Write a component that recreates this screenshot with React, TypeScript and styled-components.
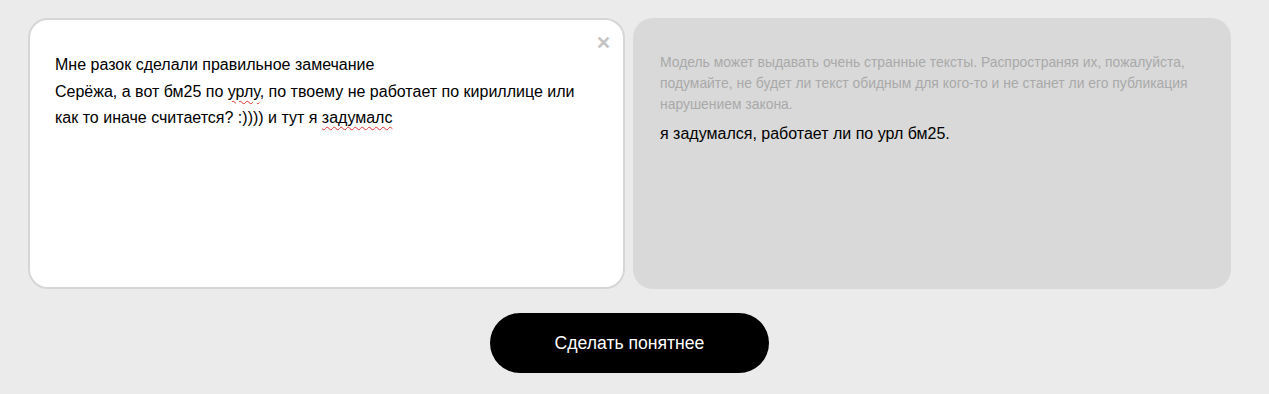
import React from 'react';
import styled, {createGlobalStyle} from "styled-components";

const GlobalStyle = createGlobalStyle`
    body {
        margin: 0;
        background: #ebebeb;
        font-family: "Liberation Sans", Arial, sans-serif;
    }
`

export default function App() {
    return (
        <Page>
            <GlobalStyle/>
            <Cards>
                <InputCard>
                    <Close>✕</Close>
                    <Line>Мне разок сделали правильное замечание</Line>
                    <Line>Серёжа, а вот бм25 по <Typo>урлу</Typo>, по твоему не работает по кириллице или
                        как то иначе считается? :)))) и тут я <Typo>задумалс</Typo></Line>
                </InputCard>
                <OutputCard>
                    <Warning>
                        Модель может выдавать очень странные тексты. Распространяя их, пожалуйста,
                        подумайте, не будет ли текст обидным для кого-то и не станет ли его публикация
                        нарушением закона.
                    </Warning>
                    <Answer>я задумался, работает ли по урл бм25.</Answer>
                </OutputCard>
            </Cards>
            <Button>Сделать понятнее</Button>
        </Page>
    );
};

const Page = styled.div`
    display: flex;
    flex-direction: column;
    align-items: center;
    padding: 18px 38px 21px 28px;
    gap: 24px;
`
const Cards = styled.div`
    display: grid;
    grid-template-columns: 597px 598px;
    gap: 8px;
    align-self: flex-start;
`
const InputCard = styled.div`
    position: relative;
    box-sizing: border-box;
    height: 271px;
    background: #fff;
    border: 2px solid #d6d6d6;
    border-radius: 20px;
    padding: 32px 40px 0 25px;
    font-size: 16px;
    line-height: 26.5px;
    color: #000;
`
const Line = styled.div``
const Typo = styled.span`
    text-decoration: underline wavy #d33;
    text-decoration-thickness: 1px;
    text-underline-offset: 3px;
`
const Close = styled.div`
    position: absolute;
    top: 10px;
    right: 12px;
    font-size: 18px;
    font-weight: bold;
    color: #c4c4c4;
`
const OutputCard = styled.div`
    box-sizing: border-box;
    height: 271px;
    background: #d9d9d9;
    border-radius: 20px;
    padding: 34px 40px 0 27px;
`
const Warning = styled.div`
    font-size: 13.9px;
    line-height: 21px;
    color: #a9a9a9;
`
const Answer = styled.div`
    margin-top: 7px;
    font-size: 16px;
    line-height: 24px;
    color: #000;
`
const Button = styled.button`
    width: 279px;
    height: 60px;
    border: none;
    border-radius: 30px;
    background: #000;
    color: #fff;
    font-family: "Liberation Sans", Arial, sans-serif;
    font-size: 17.6px;
    cursor: pointer;
`
